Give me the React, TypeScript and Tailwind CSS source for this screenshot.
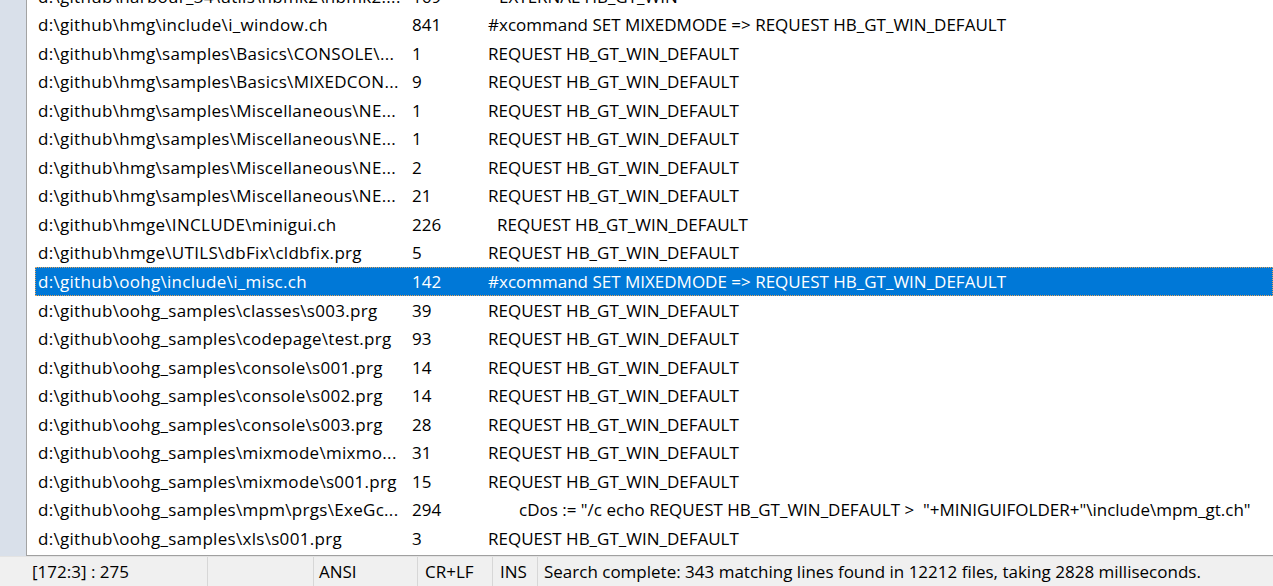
import React from "react";

type Row = { file: string; line: string; text: string; indent?: number };

const rows: Row[] = [
  { file: "d:\\github\\harbour_34\\utils\\hbmk2\\hbmk2....", line: "169", text: "EXTERNAL HB_GT_WIN", indent: 11 },
  { file: "d:\\github\\hmg\\include\\i_window.ch", line: "841", text: "#xcommand SET MIXEDMODE => REQUEST HB_GT_WIN_DEFAULT" },
  { file: "d:\\github\\hmg\\samples\\Basics\\CONSOLE\\...", line: "1", text: "REQUEST HB_GT_WIN_DEFAULT" },
  { file: "d:\\github\\hmg\\samples\\Basics\\MIXEDCON...", line: "9", text: "REQUEST HB_GT_WIN_DEFAULT" },
  { file: "d:\\github\\hmg\\samples\\Miscellaneous\\NE...", line: "1", text: "REQUEST HB_GT_WIN_DEFAULT" },
  { file: "d:\\github\\hmg\\samples\\Miscellaneous\\NE...", line: "1", text: "REQUEST HB_GT_WIN_DEFAULT" },
  { file: "d:\\github\\hmg\\samples\\Miscellaneous\\NE...", line: "2", text: "REQUEST HB_GT_WIN_DEFAULT" },
  { file: "d:\\github\\hmg\\samples\\Miscellaneous\\NE...", line: "21", text: "REQUEST HB_GT_WIN_DEFAULT" },
  { file: "d:\\github\\hmge\\INCLUDE\\minigui.ch", line: "226", text: "REQUEST HB_GT_WIN_DEFAULT", indent: 9 },
  { file: "d:\\github\\hmge\\UTILS\\dbFix\\cldbfix.prg", line: "5", text: "REQUEST HB_GT_WIN_DEFAULT" },
  { file: "d:\\github\\oohg\\include\\i_misc.ch", line: "142", text: "#xcommand SET MIXEDMODE => REQUEST HB_GT_WIN_DEFAULT" },
  { file: "d:\\github\\oohg_samples\\classes\\s003.prg", line: "39", text: "REQUEST HB_GT_WIN_DEFAULT" },
  { file: "d:\\github\\oohg_samples\\codepage\\test.prg", line: "93", text: "REQUEST HB_GT_WIN_DEFAULT" },
  { file: "d:\\github\\oohg_samples\\console\\s001.prg", line: "14", text: "REQUEST HB_GT_WIN_DEFAULT" },
  { file: "d:\\github\\oohg_samples\\console\\s002.prg", line: "14", text: "REQUEST HB_GT_WIN_DEFAULT" },
  { file: "d:\\github\\oohg_samples\\console\\s003.prg", line: "28", text: "REQUEST HB_GT_WIN_DEFAULT" },
  { file: "d:\\github\\oohg_samples\\mixmode\\mixmo...", line: "31", text: "REQUEST HB_GT_WIN_DEFAULT" },
  { file: "d:\\github\\oohg_samples\\mixmode\\s001.prg", line: "15", text: "REQUEST HB_GT_WIN_DEFAULT" },
  {
    file: "d:\\github\\oohg_samples\\mpm\\prgs\\ExeGc...",
    line: "294",
    text: 'cDos := "/c echo REQUEST HB_GT_WIN_DEFAULT >  "+MINIGUIFOLDER+"\\include\\mpm_gt.ch"',
    indent: 31,
  },
  { file: "d:\\github\\oohg_samples\\xls\\s001.prg", line: "3", text: "REQUEST HB_GT_WIN_DEFAULT" },
];

const SELECTED = 10;

export default function App() {
  return (
    <div
      className="flex h-[586px] w-[1273px] flex-col overflow-hidden bg-white text-[17px] text-black"
      style={{ fontFamily: '"Open Sans", "Noto Sans", sans-serif' }}
    >
      <div className="flex h-[556px] min-h-0">
        {/* left gutter of the parent window */}
        <div className="w-[27px] shrink-0 border-r border-[#a3a3a3] bg-[#d9e0ea]" />
        <div className="min-w-0 flex-1 overflow-hidden border-b border-[#a0a0a0] bg-white">
          <div className="-mt-[18px] pl-[8px]">
            {rows.map((r, i) => {
              const sel = i === SELECTED;
              return (
                <div
                  key={i}
                  className={`flex h-[28.56px] items-center whitespace-nowrap ${
                    sel ? "bg-[#0078d7] text-white outline-1 -outline-offset-1 outline-dotted outline-[#e3a35c]" : ""
                  }`}
                >
                  <span className="w-[377px] shrink-0 pl-[3px] tracking-[0.3px]">{r.file}</span>
                  <span className="w-[76px] shrink-0">{r.line}</span>
                  <span className="whitespace-pre" style={{ paddingLeft: r.indent ?? 0 }}>
                    {r.text}
                  </span>
                </div>
              );
            })}
          </div>
        </div>
      </div>

      {/* status bar */}
      <div className="flex h-[30px] items-center border-t border-[#e3e3e3] bg-[#f0f0f0]">
        <div className="w-[207px] shrink-0 pl-[32px]">[172:3] : 275</div>
        <div className="h-full w-[106px] shrink-0 border-l border-[#d7d7d7]" />
        <div className="flex h-full w-[104px] shrink-0 items-center border-l border-[#d7d7d7] pl-[5px]">ANSI</div>
        <div className="flex h-full w-[75px] shrink-0 items-center border-l border-[#d7d7d7] pl-[7px]">CR+LF</div>
        <div className="flex h-full w-[45px] shrink-0 items-center border-l border-[#d7d7d7] pl-[7px]">INS</div>
        <div className="flex h-full flex-1 items-center whitespace-nowrap border-l border-[#d7d7d7] pl-[6px]">
          Search complete: 343 matching lines found in 12212 files, taking 2828 milliseconds.
        </div>
      </div>
    </div>
  );
}
